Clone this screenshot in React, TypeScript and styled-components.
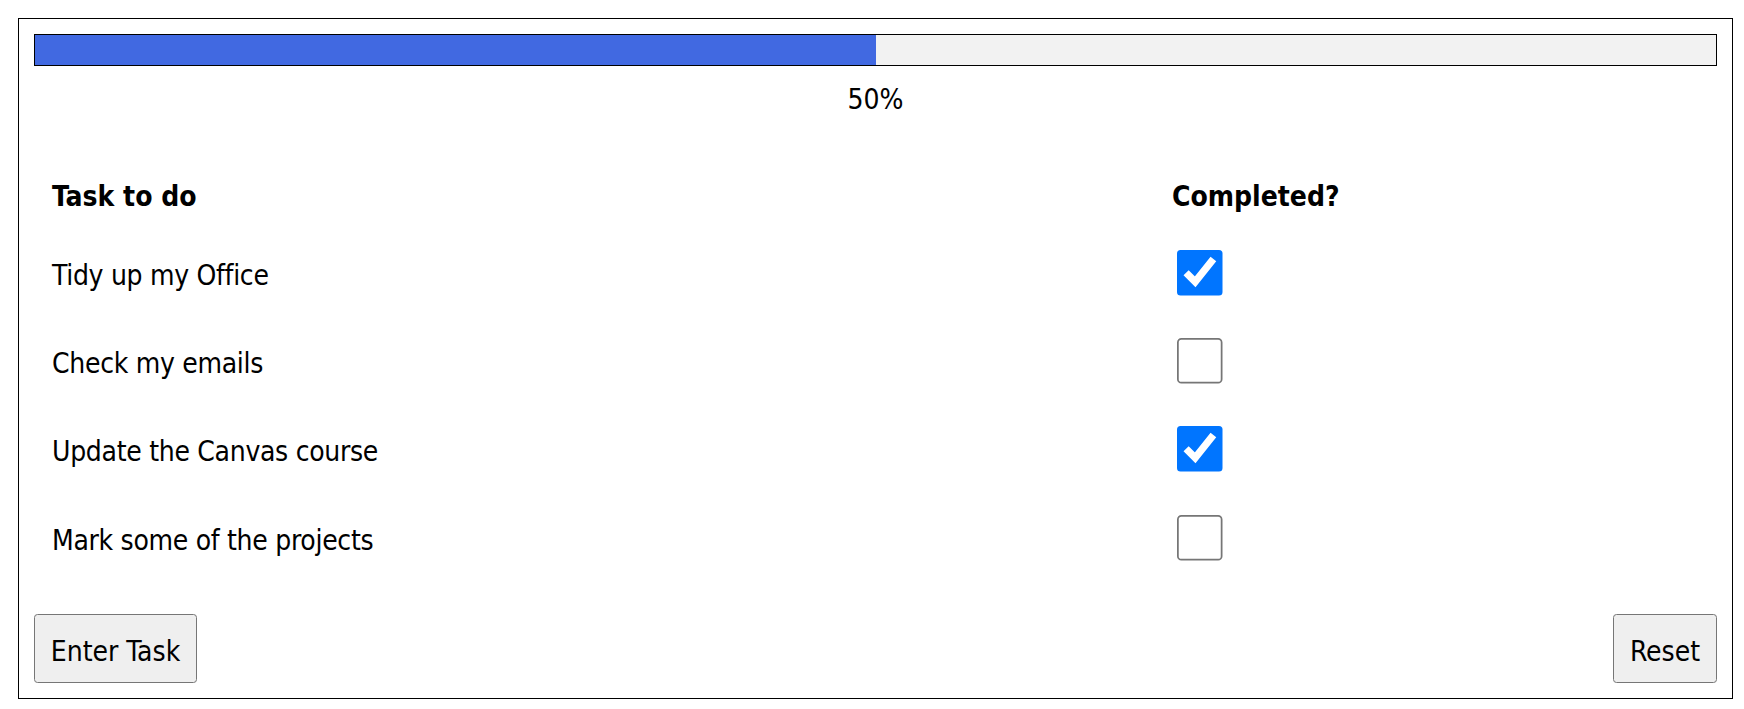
import React, { useState } from "react";
import styled, { createGlobalStyle } from "styled-components";

const FONT = `"DejaVu Sans Condensed", "DejaVu Sans", Verdana, sans-serif`;

const GlobalStyle = createGlobalStyle`
  html, body {
    margin: 0;
    padding: 0;
    background: #ffffff;
  }
  body {
    font-family: ${FONT};
    font-stretch: condensed;
    color: #000000;
  }
`;

const Page = styled.div`
  padding: 18px 11px 10px 18px;
`;

const Card = styled.section`
  border: 1px solid #000000;
  padding: 15px;
  display: flex;
  flex-direction: column;
`;

const Track = styled.div`
  box-sizing: border-box;
  height: 32px;
  border: 1px solid #000000;
  background: #f2f2f2;
`;

const Fill = styled.div`
  height: 100%;
  background: #4169e1;
`;

const Percent = styled.div`
  margin-top: 18px;
  text-align: center;
  font-size: 28px;
  line-height: 32px;
`;

const TaskGrid = styled.div`
  margin-top: 49px;
  padding: 0 18px;
  display: grid;
  grid-template-columns: 1120px 1fr;
  font-size: 28px;
  line-height: 32px;
`;

const HeadCell = styled.div`
  height: 64px;
  display: flex;
  align-items: center;
  font-weight: bold;
`;

const Cell = styled.div`
  box-sizing: border-box;
  height: 88.33px;
  display: flex;
  align-items: center;
  padding-top: 5px;
  letter-spacing: -0.3px;
`;

const CheckCell = styled(Cell)`
  padding-top: 0;
  padding-left: 5px;
`;

const Check = styled.input`
  zoom: 1.75;
  width: 27px;
  height: 27px;
  margin: 0;
`;

const Footer = styled.div`
  margin-top: 32px;
  display: flex;
  justify-content: space-between;
`;

const Button = styled.button<{ $w: number }>`
  box-sizing: border-box;
  width: ${(p) => p.$w}px;
  height: 69px;
  padding: 6px 0 0;
  background: #efefef;
  border: 1px solid #767676;
  border-radius: 3.5px;
  font-family: ${FONT};
  font-stretch: condensed;
  font-size: 28px;
  color: #000000;
`;

const initialTasks = [
  { text: "Tidy up my Office", done: true },
  { text: "Check my emails", done: false },
  { text: "Update the Canvas course", done: true },
  { text: "Mark some of the projects", done: false },
];

export default function App() {
  const [tasks, setTasks] = useState(initialTasks);
  const doneCount = tasks.filter((t) => t.done).length;
  const pct = Math.round((doneCount / tasks.length) * 100);

  const toggle = (i: number) =>
    setTasks((prev) => prev.map((t, j) => (j === i ? { ...t, done: !t.done } : t)));

  return (
    <>
      <GlobalStyle />
      <Page>
        <Card>
          <Track>
            <Fill style={{ width: `${pct}%` }} />
          </Track>
          <Percent>{pct}%</Percent>
          <TaskGrid>
            <HeadCell>Task to do</HeadCell>
            <HeadCell>Completed?</HeadCell>
            {tasks.map((t, i) => (
              <React.Fragment key={t.text}>
                <Cell>{t.text}</Cell>
                <CheckCell>
                  <Check type="checkbox" checked={t.done} onChange={() => toggle(i)} />
                </CheckCell>
              </React.Fragment>
            ))}
          </TaskGrid>
          <Footer>
            <Button $w={163}>Enter Task</Button>
            <Button $w={104} onClick={() => setTasks((p) => p.map((t) => ({ ...t, done: false })))}>
              Reset
            </Button>
          </Footer>
        </Card>
      </Page>
    </>
  );
}
